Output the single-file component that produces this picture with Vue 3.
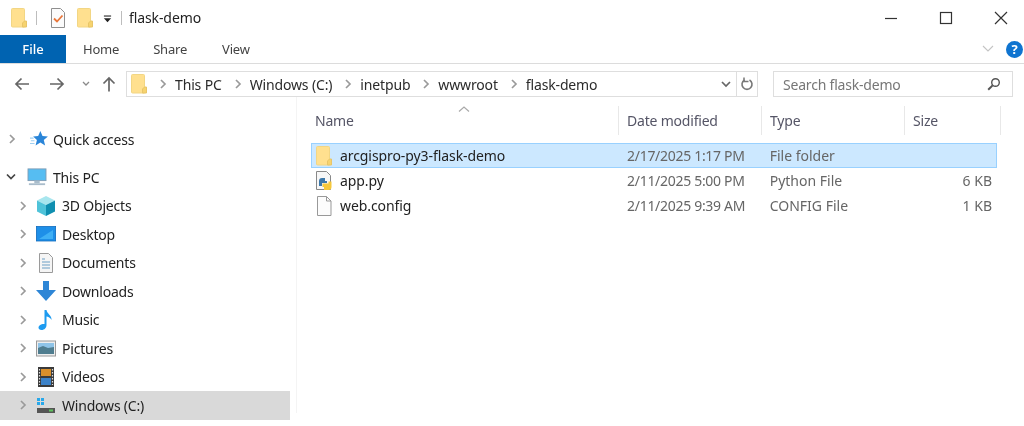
<script setup>
const crumbs = ['This PC', 'Windows (C:)', 'inetpub', 'wwwroot', 'flask-demo']
const columns = [
  { label: 'Name', cls: 'col-name' },
  { label: 'Date modified', cls: 'col-date' },
  { label: 'Type', cls: 'col-type' },
  { label: 'Size', cls: 'col-size' },
]
const files = [
  { name: 'arcgispro-py3-flask-demo', date: '2/17/2025 1:17 PM', type: 'File folder', size: '', icon: 'folder', selected: true },
  { name: 'app.py', date: '2/11/2025 5:00 PM', type: 'Python File', size: '6 KB', icon: 'py' },
  { name: 'web.config', date: '2/11/2025 9:39 AM', type: 'CONFIG File', size: '1 KB', icon: 'doc' },
]
const pcChildren = [
  { label: '3D Objects', icon: 'cube' },
  { label: 'Desktop', icon: 'desktop' },
  { label: 'Documents', icon: 'documents' },
  { label: 'Downloads', icon: 'downloads' },
  { label: 'Music', icon: 'music' },
  { label: 'Pictures', icon: 'pictures' },
  { label: 'Videos', icon: 'videos' },
  { label: 'Windows (C:)', icon: 'drive', selected: true },
]
</script>

<template>
  <div class="explorer">
    <svg class="defs" width="0" height="0" aria-hidden="true">
      <symbol id="folder" viewBox="0 0 16 20">
        <path d="M.5 1.5a1 1 0 0 1 1-1h11a1 1 0 0 1 1 1v17.500h-12a1 1 0 0 1-1-1z" fill="#ffe08f" stroke="#f2d684" />
        <path d="M13.5 13h2v6h-4v-4z" fill="#f6d36f" stroke="#e8c569" />
      </symbol>
      <symbol id="chev" viewBox="0 0 8 10">
        <path d="M2 1l4 4-4 4" fill="none" stroke="currentColor" stroke-width="1.7" />
      </symbol>
    </svg>

    <header class="titlebar">
      <svg class="ico-folder"><use href="#folder" /></svg>
      <span class="tsep first"></span>
      <svg class="ico-props" viewBox="0 0 16 20">
        <path d="M1.5.5h9l4 4v15h-13z" fill="#fbfbfb" stroke="#8f8f8f" />
        <path d="M4 10.500l3 3 5.500-6" fill="none" stroke="#e8763a" stroke-width="1.8" />
      </svg>
      <svg class="ico-folder second"><use href="#folder" /></svg>
      <svg class="ico-qat" viewBox="0 0 10 8">
        <path d="M1 .7h8" stroke="#222" stroke-width="1.2" />
        <path d="M1 3.2h8L5 7.6z" fill="#222" />
      </svg>
      <span class="tsep last"></span>
      <span class="title">flask-demo</span>
      <div class="winctl">
        <svg width="14" height="14" viewBox="0 0 14 14"><path d="M1 7.5h12" stroke="#333" stroke-width="1.2" /></svg>
        <svg width="14" height="14" viewBox="0 0 14 14"><rect x="1.5" y="1.5" width="11" height="11" fill="none" stroke="#333" stroke-width="1.2" /></svg>
        <svg width="14" height="14" viewBox="0 0 14 14"><path d="M1 1l12 12M13 1L1 13" stroke="#333" stroke-width="1.2" /></svg>
      </div>
    </header>

    <nav class="ribbon">
      <span class="tab file">File</span>
      <span class="tab home">Home</span>
      <span class="tab share">Share</span>
      <span class="tab view">View</span>
      <svg class="collapse" width="12" height="8" viewBox="0 0 12 8"><path d="M1 1l5 5 5-5" fill="none" stroke="#c4c4c4" stroke-width="1.1" /></svg>
      <span class="help">?</span>
    </nav>

    <section class="addressrow">
      <div class="navbtns">
        <svg width="16" height="14" viewBox="0 0 16 14"><path d="M15 7H2M7.5 1.5L2 7l5.5 5.5" fill="none" stroke="#666" stroke-width="1.7" /></svg>
        <svg width="16" height="14" viewBox="0 0 16 14"><path d="M1 7h13M8.5 1.5L14 7l-5.5 5.5" fill="none" stroke="#666" stroke-width="1.7" /></svg>
        <svg width="8" height="6" viewBox="0 0 8 6"><path d="M1 1l3 3 3-3" fill="none" stroke="#8a8a8a" stroke-width="1.3" /></svg>
        <svg width="14" height="16" viewBox="0 0 14 16"><path d="M7 15.5V2M1.5 7.5L7 2l5.500 5.500" fill="none" stroke="#666" stroke-width="1.7" /></svg>
      </div>
      <div class="address">
        <svg class="ico-folder addr"><use href="#folder" /></svg>
        <template v-for="c in crumbs" :key="c">
          <svg class="crumb-chev"><use href="#chev" /></svg>
          <span class="crumb">{{ c }}</span>
        </template>
        <svg class="addr-drop" width="10" height="7" viewBox="0 0 10 7"><path d="M1 1l4 4 4-4" fill="none" stroke="#666" stroke-width="1.7" /></svg>
        <span class="addr-refresh">
          <svg width="14" height="14" viewBox="0 0 14 14"><path d="M9.500 3a5 5 0 1 1-5 0" fill="none" stroke="#777" stroke-width="1.6" /><path d="M4 .5v4h4.500" fill="none" stroke="#777" stroke-width="1.5" /></svg>
        </span>
      </div>
      <div class="search">
        <span>Search flask-demo</span>
        <svg width="14" height="14" viewBox="0 0 14 14"><circle cx="8.5" cy="5.5" r="3.8" fill="none" stroke="#555" stroke-width="1.4" /><path d="M5.6 8.4L1.2 12.8" stroke="#555" stroke-width="2" /></svg>
      </div>
    </section>

    <main class="body">
      <aside class="tree">
        <div class="row quick">
          <svg class="tchev"><use href="#chev" /></svg>
          <svg class="navico" viewBox="0 0 20 20">
            <path d="M11.5 1l2.400 5.700 6 .5-4.600 3.900 1.500 6-5.300-3.300-5.300 3.300 1.500-6L3.500 7.200l5.600-.5z" fill="#2a85d8" />
            <path d="M0 9h4M1 12h4M0 15h5" stroke="#9fd0f2" stroke-width="1.2" />
          </svg>
          <span>Quick access</span>
        </div>
        <div class="row pc">
          <svg class="tdown" viewBox="0 0 10 8"><path d="M1 1.500l4 4 4-4" fill="none" stroke="#444" stroke-width="1.7" /></svg>
          <svg class="navico wide" viewBox="0 0 22 20">
            <rect x="1" y="1" width="20" height="13" fill="#56bdf2" stroke="#7f9cb4" />
            <rect x="8" y="14" width="6" height="3" fill="#a9bccb" />
            <rect x="2" y="17" width="18" height="2" fill="#a9bccb" />
          </svg>
          <span>This PC</span>
        </div>
        <div v-for="n in pcChildren" :key="n.label" class="row child" :class="{ sel: n.selected }">
          <svg class="tchev"><use href="#chev" /></svg>
          <svg v-if="n.icon === 'cube'" class="navico" viewBox="0 0 20 20">
            <path d="M10 0l9 4.500-9 4.500-9-4.500z" fill="#a8e6ee" />
            <path d="M1 4.500l9 4.500v11l-9-4.500z" fill="#4fc3d9" />
            <path d="M19 4.500L10 9v11l9-4.500z" fill="#0f8fb0" />
          </svg>
          <svg v-else-if="n.icon === 'desktop'" class="navico" viewBox="0 0 20 20">
            <rect x=".4" y="2.500" width="19.200" height="14.500" fill="#1e8fe8" stroke="#0f6cbd" stroke-width=".8" />
            <path d="M3 15L17 6v9z" fill="#3fb0f5" />
          </svg>
          <svg v-else-if="n.icon === 'documents'" class="navico" viewBox="0 0 20 20">
            <path d="M3.500.5h9l4 4v15h-13z" fill="#f5f5f5" stroke="#9a9a9a" />
            <path d="M6 6h3M6 9h8M6 12h8M6 15h8" stroke="#6d9fc6" stroke-width="1.2" />
          </svg>
          <svg v-else-if="n.icon === 'downloads'" class="navico" viewBox="0 0 20 20">
            <path d="M7 0h6v9h7L10 20 0 9h7z" fill="#2e86d6" />
          </svg>
          <svg v-else-if="n.icon === 'music'" class="navico" viewBox="0 0 20 20">
            <path d="M8.500 0h2c.4 4 5.500 5 5 10-1-2-3.500-3.200-5-3.400V15c0 2.800-2 5-5 5-2 0-3-1-3-2.500C2.500 15.500 5.500 13.500 8.500 14z" fill="#1d9bf0" />
          </svg>
          <svg v-else-if="n.icon === 'pictures'" class="navico" viewBox="0 0 20 20">
            <rect x=".5" y="3" width="19" height="15" fill="#eee" stroke="#9a9a9a" />
            <rect x="2" y="5" width="16" height="5" fill="#8fc4e8" />
            <path d="M2 10l5-2 5 2 6-1v7H2z" fill="#4f7d8f" />
          </svg>
          <svg v-else-if="n.icon === 'videos'" class="navico" viewBox="0 0 20 20">
            <rect x="2" y="0" width="16" height="20" fill="#3a3a3a" />
            <rect x="5" y="2" width="10" height="7" fill="#d98f2b" />
            <rect x="5" y="11" width="10" height="7" fill="#3c82c8" />
            <path d="M3.500 2v16M16.500 2v16" stroke="#ddd" stroke-width="1.200" stroke-dasharray="1.500 1.500" />
          </svg>
          <svg v-else class="navico" viewBox="0 0 20 20">
            <path d="M1 3h3v3H1zM5 3h3v3H5zM1 7h3v3H1zM5 7h3v3H5z" fill="#28a8ea" />
            <rect x="1" y="13" width="18" height="5" fill="#555" />
            <rect x="13" y="14.500" width="4" height="2" fill="#5fc35f" />
          </svg>
          <span>{{ n.label }}</span>
        </div>
      </aside>

      <div class="list">
        <svg class="sort" width="12" height="6" viewBox="0 0 12 6"><path d="M1 5.500l5-4.500 5 4.500" fill="none" stroke="#a9a9a9" stroke-width="1.200" /></svg>
        <div class="headers">
          <span v-for="c in columns" :key="c.label" class="hd" :class="c.cls">{{ c.label }}</span>
        </div>
        <div v-for="f in files" :key="f.name" class="file-row" :class="{ sel: f.selected }">
          <span class="cell col-name namecell">
            <svg v-if="f.icon === 'folder'" class="ficon"><use href="#folder" /></svg>
            <svg v-else-if="f.icon === 'py'" class="ficon" viewBox="0 0 16 20">
              <path d="M.5.500h10l4 4v14H.5z" fill="#f7f7f7" stroke="#888" />
              <path d="M3 10a3 3 0 0 1 3-3h3v3h2v2H6v3H3z" fill="#3c78aa" />
              <path d="M15.500 10.500V16a3 3 0 0 1-3 3H8v-3H6.500v-3.500h6V10.500z" fill="#f5c83c" />
            </svg>
            <svg v-else class="ficon" viewBox="0 0 16 20">
              <path d="M1.500.500h9l4.500 4.500v14.500H1.500z" fill="#fcfcfc" stroke="#999" />
              <path d="M10.500.500V5H15" fill="none" stroke="#999" />
            </svg>
            <span class="fname">{{ f.name }}</span>
          </span>
          <span class="cell col-date muted">{{ f.date }}</span>
          <span class="cell col-type muted">{{ f.type }}</span>
          <span class="cell col-size muted">{{ f.size }}</span>
        </div>
      </div>
    </main>
  </div>
</template>

<style>
html, body { margin: 0; background: #fff; }
</style>

<style scoped>
.explorer {
  width: 1024px;
  height: 426px;
  overflow: hidden;
  background: #fff;
  font-family: "Noto Sans", "Open Sans", sans-serif;
  font-size: 14px;
  color: #2b2b2b;
  filter: blur(0.4px);
}
.defs { position: absolute; }

.titlebar {
  height: 35px;
  display: flex;
  align-items: center;
  padding-left: 11px;
  box-sizing: border-box;
}
.ico-folder { width: 16px; height: 20px; flex: none; }
.ico-props { width: 16px; height: 20px; margin-left: 13px; }
.ico-folder.second { margin-left: 11px; }
.ico-qat { width: 9px; height: 8px; margin-left: 10px; margin-top: 2px; }
.tsep { width: 1px; height: 14px; background: #bdbdbd; }
.tsep.first { margin-left: 9px; }
.tsep.last { margin-left: 9px; }
.title { margin-left: 7px; color: #222; letter-spacing: -0.1px; }
.winctl {
  margin-left: auto;
  display: flex;
  gap: 41px;
  padding-right: 16px;
}

.ribbon {
  height: 28px;
  display: flex;
  align-items: center;
  border-bottom: 1px solid #dcdcdc;
  font-size: 13px;
}
.tab { color: #444; letter-spacing: -0.2px; }
.tab.file {
  width: 66px;
  height: 28px;
  background: #0063b1;
  color: #fff;
  display: flex;
  align-items: center;
  justify-content: center;
  font-weight: 500;
  letter-spacing: 0;
}
.tab.home { margin-left: 17px; }
.tab.share { margin-left: 34px; }
.tab.view { margin-left: 35px; }
.collapse { margin-left: auto; }
.help {
  width: 17px;
  height: 17px;
  border-radius: 50%;
  background: #0f74d0;
  color: #fff;
  font-size: 13px;
  font-weight: 700;
  line-height: 17px;
  text-align: center;
  margin-left: 12px;
  margin-right: 1px;
}

.addressrow {
  height: 26px;
  margin-top: 7px;
  display: flex;
  align-items: center;
}
.navbtns {
  width: 126px;
  flex: none;
  display: flex;
  align-items: center;
  padding-left: 14px;
  box-sizing: border-box;
}
.navbtns svg:nth-child(2) { margin-left: 19px; }
.navbtns svg:nth-child(3) { margin-left: 17px; }
.navbtns svg:nth-child(4) { margin-left: 12px; }
.address {
  width: 632px;
  height: 26px;
  box-sizing: border-box;
  border: 1px solid #dedede;
  display: flex;
  align-items: center;
  padding-left: 4px;
  color: #2b2b2b;
}
.crumb-chev { width: 8px; height: 10px; color: #9a9a9a; margin: 0 8px 0 12px; flex: none; }
.address > .crumb-chev:first-of-type { margin-left: 11px; }
.crumb { white-space: nowrap; letter-spacing: -0.15px; }
.addr-drop { margin-left: auto; margin-right: 5px; }
.addr-refresh {
  width: 20px;
  height: 24px;
  border-left: 1px solid #dedede;
  display: flex;
  align-items: center;
  justify-content: center;
}
.search {
  width: 240px;
  height: 26px;
  box-sizing: border-box;
  margin-left: 15px;
  border: 1px solid #dedede;
  display: flex;
  align-items: center;
  justify-content: space-between;
  padding: 0 11px 0 9px;
  color: #777;
  letter-spacing: -0.2px;
}

.body {
  display: flex;
  height: 329px;
}
.tree {
  width: 291px;
  flex: none;
  padding-top: 28px;
  box-sizing: border-box;
  letter-spacing: -0.2px;
}
.row {
  height: 28.500px;
  display: flex;
  align-items: center;
  color: #222;
  white-space: nowrap;
}
.row.quick { height: 28px; margin-bottom: 10px; padding-left: 8px; }
.row.pc { padding-left: 6px; }
.row.child { padding-left: 19px; width: 290px; box-sizing: border-box; }
.row.sel { background: #d9d9d9; }
.tchev { width: 8px; height: 10px; color: #9a9a9a; flex: none; }
.tdown { width: 10px; height: 8px; flex: none; }
.navico { width: 18px; height: 18px; flex: none; margin-left: 14px; margin-right: 5px; }
.navico.wide { width: 22px; margin-left: 10px; margin-right: 5px; }
.row.child .navico { width: 20px; height: 20px; margin-left: 9px; margin-right: 6px; }

.list {
  position: relative;
  flex: 1;
  border-left: 1px solid #f4f4f4;
  margin-left: 5px;
  height: 316px;
}
.sort { position: absolute; left: 161px; top: 9px; }
.headers {
  height: 29px;
  margin-top: 9px;
  display: flex;
  align-items: center;
  color: #556;
  font-size: 14px;
  letter-spacing: -0.2px;
}
.col-name { width: 322px; padding-left: 18px; box-sizing: border-box; }
.col-date { width: 143px; padding-left: 8px; box-sizing: border-box; }
.col-type { width: 143px; padding-left: 8px; box-sizing: border-box; }
.col-size { width: 96px; padding-left: 8px; box-sizing: border-box; }
.hd { height: 29px; line-height: 29px; border-right: 1px solid #e8e8e8; white-space: nowrap; }
.file-row {
  height: 25px;
  display: flex;
  align-items: center;
  width: 686px;
  margin-left: 14px;
  box-sizing: border-box;
  border: 1px solid transparent;
}
.headers + .file-row { margin-top: 8px; }
.file-row.sel { background: #cce8ff; border-color: #99d1ff; }
.file-row .col-name { width: 308px; padding-left: 4px; }
.file-row .col-date { letter-spacing: -0.3px; }
.file-row .col-size { width: 92px; padding: 0 4px 0 0; text-align: right; }
.cell { white-space: nowrap; }
.namecell { display: flex; align-items: center; }
.ficon { width: 16px; height: 20px; flex: none; }
.fname { margin-left: 8px; color: #222; letter-spacing: -0.08px; }
.muted { color: #666; }
</style>
